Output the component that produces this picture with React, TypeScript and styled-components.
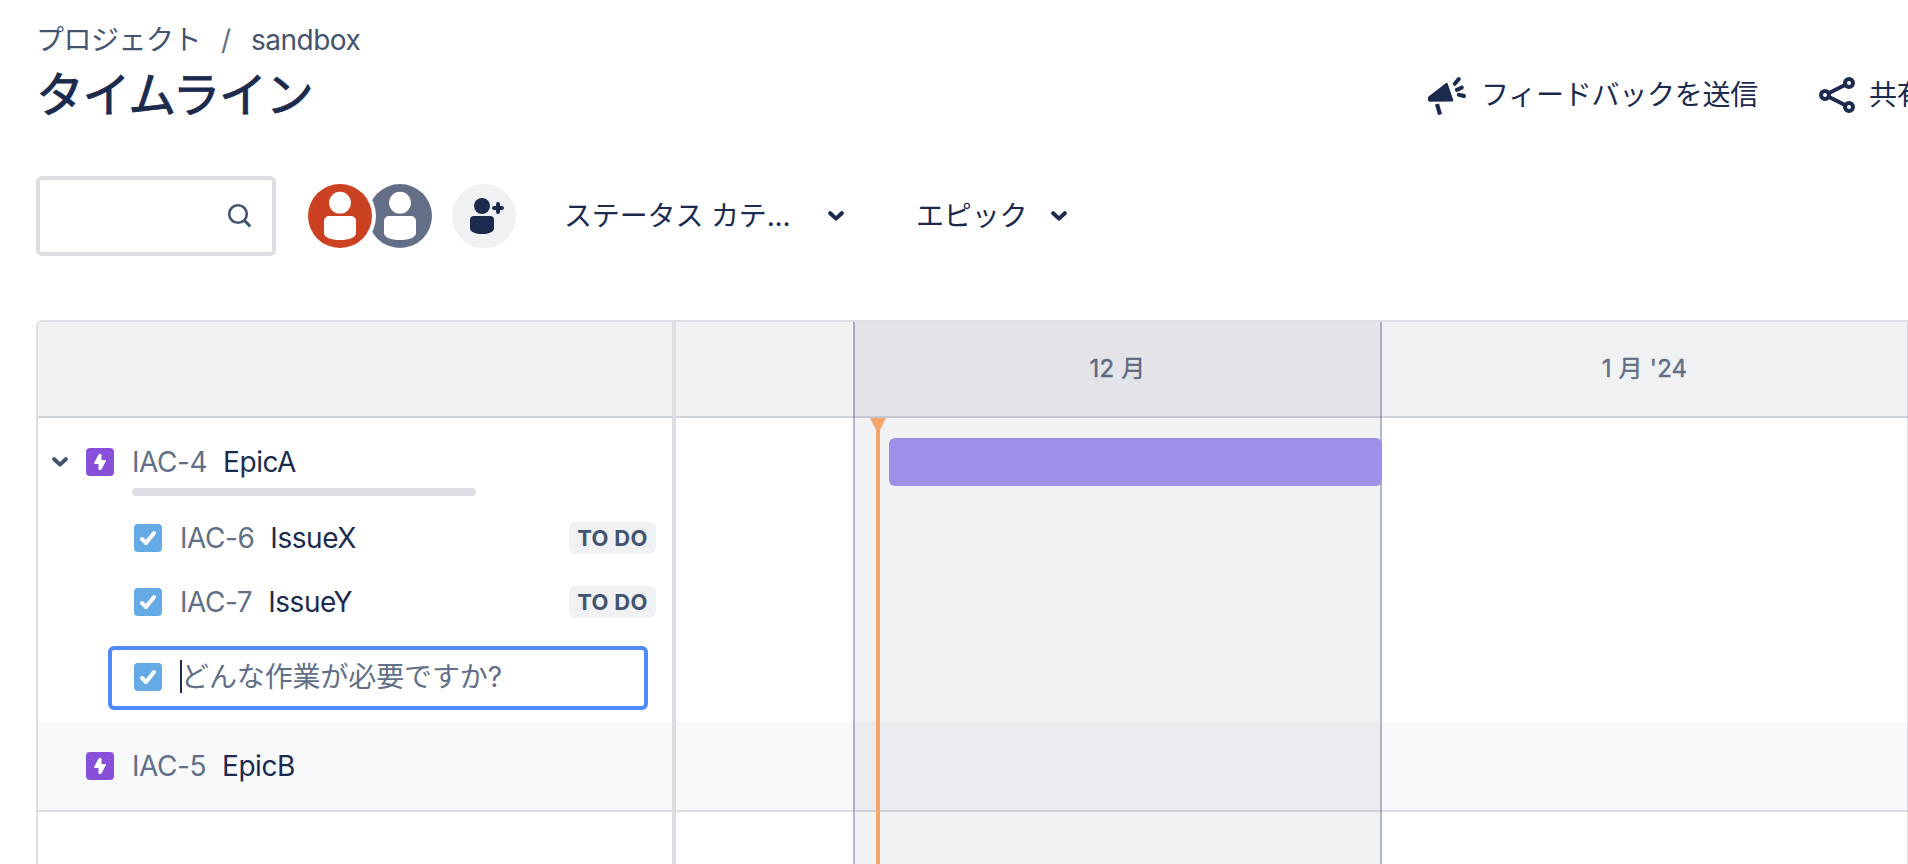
import React from "react";
import styled, { createGlobalStyle } from "styled-components";

const color = {
  text: "#1c2b4d",
  subtle: "#44546f",
  subtlest: "#626f86",
  border: "#dddee4",
  surface: "#f0f1f3",
};

const GlobalStyle = createGlobalStyle`
  * { box-sizing: border-box; }
  body {
    margin: 0;
    background: #fff;
    color: ${color.text};
    font-family: Inter, "Noto Sans CJK JP", sans-serif;
    font-size: 28px;
    line-height: 40px;
    overflow: hidden;
  }
  svg { display: block; flex: none; }
`;

const Page = styled.main`
  width: 100vw;
  height: 864px;
  padding: 20px 0 0 36px;
  overflow: hidden;
  display: flex;
  flex-direction: column;
`;

const Breadcrumbs = styled.nav`
  display: flex;
  height: 40px;
  color: ${color.subtle};
  white-space: nowrap;
`;

const Crumb = styled.span`
  letter-spacing: -0.5px;
`;

const Slash = styled.span`
  width: 50px;
  text-align: center;
  color: ${color.subtlest};
`;

const TitleRow = styled.header`
  display: flex;
  align-items: center;
  justify-content: space-between;
  height: 70px;
`;

const Title = styled.h1`
  margin: 0;
  font-size: 48px;
  font-weight: 400;
  line-height: 56px;
  letter-spacing: -1.4px;
  -webkit-text-stroke: 0.9px ${color.text};
  white-space: nowrap;
`;

const Actions = styled.div`
  display: flex;
  flex: none;
  width: 480px;
  overflow: hidden;
  gap: 61px;
`;

const Action = styled.button<{ $gap: number }>`
  all: unset;
  display: flex;
  flex: none;
  align-items: center;
  gap: ${(p) => p.$gap}px;
  height: 40px;
  letter-spacing: -0.25px;
  white-space: nowrap;
`;

const Toolbar = styled.div`
  display: flex;
  align-items: center;
  height: 80px;
  margin-top: 46px;
`;

const SearchBox = styled.div`
  display: flex;
  align-items: center;
  justify-content: flex-end;
  width: 240px;
  height: 80px;
  padding-right: 20px;
  border: 4px solid ${color.border};
  border-radius: 6px;
`;

const AvatarGroup = styled.div`
  display: flex;
  margin-left: 28px;
`;

const Avatar = styled.div<{ $bg: string; $order: number }>`
  position: relative;
  z-index: ${(p) => -p.$order};
  width: 64px;
  height: 64px;
  margin: 4px ${(p) => (p.$order === 0 ? "-4px" : "4px")} 4px ${(p) => (p.$order === 0 ? "4px" : "0")};
  border-radius: 50%;
  background: ${(p) => p.$bg};
  box-shadow: 0 0 0 4px #fff;
`;

const AddPeople = styled.button`
  all: unset;
  width: 64px;
  height: 64px;
  margin-left: 16px;
  border-radius: 50%;
  background: ${color.surface};
`;

const Filter = styled.button<{ $width: number; $offset: number }>`
  all: unset;
  display: flex;
  align-items: center;
  justify-content: space-between;
  width: ${(p) => p.$width}px;
  margin-left: ${(p) => p.$offset}px;
  letter-spacing: -0.15px;
  white-space: nowrap;
`;

const Board = styled.section`
  display: flex;
  height: 544px;
  margin-top: 64px;
  border: 2px solid ${color.border};
  border-right: 0;
  border-bottom: 0;
  border-radius: 6px 0 0 0;
  overflow: hidden;
`;

const ListPane = styled.div`
  flex: none;
  width: 638px;
  border-right: 4px solid ${color.border};
`;

const HeaderBar = styled.div`
  display: flex;
  height: 96px;
  background: ${color.surface};
  border-bottom: 2px solid #d0d2dc;
`;

const EpicRow = styled.div<{ $striped?: boolean }>`
  display: flex;
  align-items: center;
  height: ${(p) => (p.$striped ? 90 : 88)}px;
  padding-left: 14px;
  position: relative;
  background: ${(p) => (p.$striped ? "#f7f8fa" : "#fff")};
  border-bottom: ${(p) => (p.$striped ? `2px solid ${color.border}` : "0")};
`;

const ExpandSlot = styled.span`
  display: flex;
  width: 34px;
`;

const IssueRow = styled.div`
  display: flex;
  align-items: center;
  height: 64px;
  padding: 0 16px 0 96px;
`;

const TypeIcon = styled.span<{ $bg: string }>`
  display: block;
  flex: none;
  width: 28px;
  height: 28px;
  border-radius: 4px;
  background: ${(p) => p.$bg};
`;

const IssueKey = styled.span`
  margin-left: 18px;
  color: ${color.subtlest};
  letter-spacing: -0.45px;
  white-space: nowrap;
`;

const Summary = styled.span`
  margin-left: 16px;
  letter-spacing: -0.45px;
  white-space: nowrap;
`;

const Progress = styled.div`
  position: absolute;
  left: 94px;
  top: 70px;
  width: 344px;
  height: 8px;
  border-radius: 4px;
  background: ${color.border};
`;

const Lozenge = styled.span`
  display: flex;
  align-items: center;
  justify-content: center;
  width: 87px;
  height: 32px;
  margin-left: auto;
  border-radius: 6px;
  background: ${color.surface};
  color: ${color.subtle};
  font-size: 22px;
  font-weight: 700;
  line-height: 32px;
  letter-spacing: 0.35px;
  white-space: nowrap;
`;

const CreateRow = styled.div`
  height: 88px;
  padding: 12px 24px 12px 70px;
`;

const CreateField = styled.div`
  display: flex;
  align-items: center;
  height: 64px;
  padding: 0 0 3px 22px;
  border: 4px solid #4f8bf8;
  border-radius: 6px;
  white-space: nowrap;
`;

const Caret = styled.span`
  width: 2px;
  height: 33px;
  margin-left: 18px;
  background: ${color.text};
`;

const Placeholder = styled.span`
  margin-left: -1px;
  color: ${color.subtlest};
  letter-spacing: -0.12px;
`;

const Timeline = styled.div`
  flex: 1;
  position: relative;
`;

const Month = styled.div<{ $width: number }>`
  display: flex;
  align-items: center;
  justify-content: center;
  flex: none;
  width: ${(p) => p.$width}px;
  color: ${color.subtlest};
  font-size: 24px;
  letter-spacing: 0.2px;
  -webkit-text-stroke: 0.4px ${color.subtlest};
  white-space: nowrap;
`;

const TrackSpace = styled.div`
  height: 304px;
`;

const CurrentMonth = styled.div`
  position: absolute;
  top: 0;
  bottom: 0;
  left: 177px;
  width: 529px;
  border: solid rgba(9, 30, 66, 0.31);
  border-width: 0 2px;
  background: rgba(9, 30, 66, 0.06);
  background-clip: padding-box;
`;

const MonthLine = styled.div`
  position: absolute;
  top: 0;
  bottom: 0;
  right: 0;
  width: 1px;
  background: rgba(9, 30, 66, 0.14);
`;

const EpicBar = styled.div`
  position: absolute;
  left: 213px;
  top: 116px;
  width: 493px;
  height: 48px;
  border-radius: 6px;
  background: #9e90e8;
`;

const Today = styled.svg`
  position: absolute;
  left: 194px;
  top: 96px;
`;

const Chevron = ({ fill = color.text }: { fill?: string }) => (
  <svg width="16" height="12" viewBox="0 0 16 12" fill="none" stroke={fill} strokeWidth="4" strokeLinecap="round" strokeLinejoin="round">
    <path d="M2.2 3.200 8 8.600l5.800-5.400" />
  </svg>
);

const Person = () => (
  <svg width="64" height="64" viewBox="0 0 64 64" fill="#fff">
    <circle cx="32" cy="18.700" r="10.900" />
    <path d="M21 32h22a5 5 0 0 1 5 5v12c0 4.500-7 7-16 7s-16-2.500-16-7V37a5 5 0 0 1 5-5Z" />
  </svg>
);

const EpicIcon = () => (
  <TypeIcon $bg="#8850d8">
    <svg width="28" height="28" viewBox="0 0 28 28" fill="#fff" stroke="#fff" strokeWidth="1.400" strokeLinejoin="round">
      <path d="M13.300 6.700 8.700 15.300h4.500V21.300h1.500L19.300 12.700h-4.500V6.700Z" />
    </svg>
  </TypeIcon>
);

const TaskIcon = () => (
  <TypeIcon $bg="#65aae5">
    <svg width="28" height="28" viewBox="0 0 28 28" fill="none" stroke="#fff" strokeWidth="4" strokeLinecap="round" strokeLinejoin="round">
      <path d="m8 15 4 4L20 9" />
    </svg>
  </TypeIcon>
);

const issues = [
  { id: "IAC-6", name: "IssueX" },
  { id: "IAC-7", name: "IssueY" },
];

export default function App() {
  return (
    <Page>
      <GlobalStyle />
      <Breadcrumbs>
        <Crumb>プロジェクト</Crumb>
        <Slash>/</Slash>
        <Crumb>sandbox</Crumb>
      </Breadcrumbs>
      <TitleRow>
        <Title>タイムライン</Title>
        <Actions>
          <Action $gap={13}>
            <svg width="40" height="40" viewBox="0 0 40 40" fill="none" stroke={color.text} strokeLinecap="round" strokeLinejoin="round">
              <path d="M18.700 8.700 1.800 21.800C.4 23 .5 25.700 2.200 25.700L24.300 25.400Z" fill={color.text} strokeWidth="2" />
              <path d="m9 29 3 10.500" strokeWidth="4.200" strokeLinecap="butt" />
              <path d="m26.800 8.800 4-4.800M28.800 14.800l5-2.200M30.800 19.800l5.200 1.200" strokeWidth="4" />
            </svg>
            フィードバックを送信
          </Action>
          <Action $gap={14}>
            <svg width="36" height="36" viewBox="0 0 36 36" fill="none" stroke={color.text} strokeWidth="4">
              <circle cx="6" cy="18" r="4" />
              <circle cx="30" cy="6" r="4" />
              <circle cx="30" cy="30" r="4" />
              <path d="m9.500 16.200 17-8.400M9.500 19.800l17 8.400" />
            </svg>
            共有
          </Action>
        </Actions>
      </TitleRow>
      <Toolbar>
        <SearchBox>
          <svg width="26" height="26" viewBox="0 0 26 26" fill="none" stroke={color.subtle} strokeWidth="2.600">
            <circle cx="12" cy="11" r="8.800" />
            <path d="m18.200 17.200 6 6.200" strokeWidth="3" />
          </svg>
        </SearchBox>
        <AvatarGroup>
          <Avatar $bg="#cb4223" $order={0}>
            <Person />
          </Avatar>
          <Avatar $bg="#626f86" $order={1}>
            <Person />
          </Avatar>
        </AvatarGroup>
        <AddPeople aria-label="ユーザーを追加">
          <svg width="64" height="64" viewBox="0 0 64 64" fill={color.text}>
            <circle cx="30" cy="22" r="8" />
            <path d="M22 32h16a4 4 0 0 1 4 4v8.500c0 3.500-5.500 5.500-12 5.500s-12-2-12-5.500V36a4 4 0 0 1 4-4Z" />
            <path d="M46 20v8M42 24h8" stroke={color.text} strokeWidth="4" strokeLinecap="round" />
          </svg>
        </AddPeople>
        <Filter $width={280} $offset={48}>
          ステータス カテ...
          <Chevron />
        </Filter>
        <Filter $width={151} $offset={72}>
          エピック
          <Chevron />
        </Filter>
      </Toolbar>
      <Board>
        <ListPane>
          <HeaderBar />
          <EpicRow>
            <ExpandSlot>
              <Chevron fill={color.subtle} />
            </ExpandSlot>
            <EpicIcon />
            <IssueKey>IAC-4</IssueKey>
            <Summary>EpicA</Summary>
            <Progress />
          </EpicRow>
          {issues.map((issue) => (
            <IssueRow key={issue.id}>
              <TaskIcon />
              <IssueKey>{issue.id}</IssueKey>
              <Summary>{issue.name}</Summary>
              <Lozenge>TO DO</Lozenge>
            </IssueRow>
          ))}
          <CreateRow>
            <CreateField>
              <TaskIcon />
              <Caret />
              <Placeholder>どんな作業が必要ですか?</Placeholder>
            </CreateField>
          </CreateRow>
          <EpicRow $striped>
            <ExpandSlot />
            <EpicIcon />
            <IssueKey>IAC-5</IssueKey>
            <Summary>EpicB</Summary>
          </EpicRow>
        </ListPane>
        <Timeline>
          <HeaderBar>
            <Month $width={178} />
            <Month $width={527}>12 月</Month>
            <Month $width={527}>1 月 '24</Month>
          </HeaderBar>
          <TrackSpace />
          <EpicRow $striped />
          <CurrentMonth />
          <MonthLine />
          <EpicBar />
          <Today width="16" height="448" viewBox="0 0 16 448" fill="#f4a66b">
            <path d="M0 0h16l-6 12v436H6V12Z" />
          </Today>
        </Timeline>
      </Board>
    </Page>
  );
}
